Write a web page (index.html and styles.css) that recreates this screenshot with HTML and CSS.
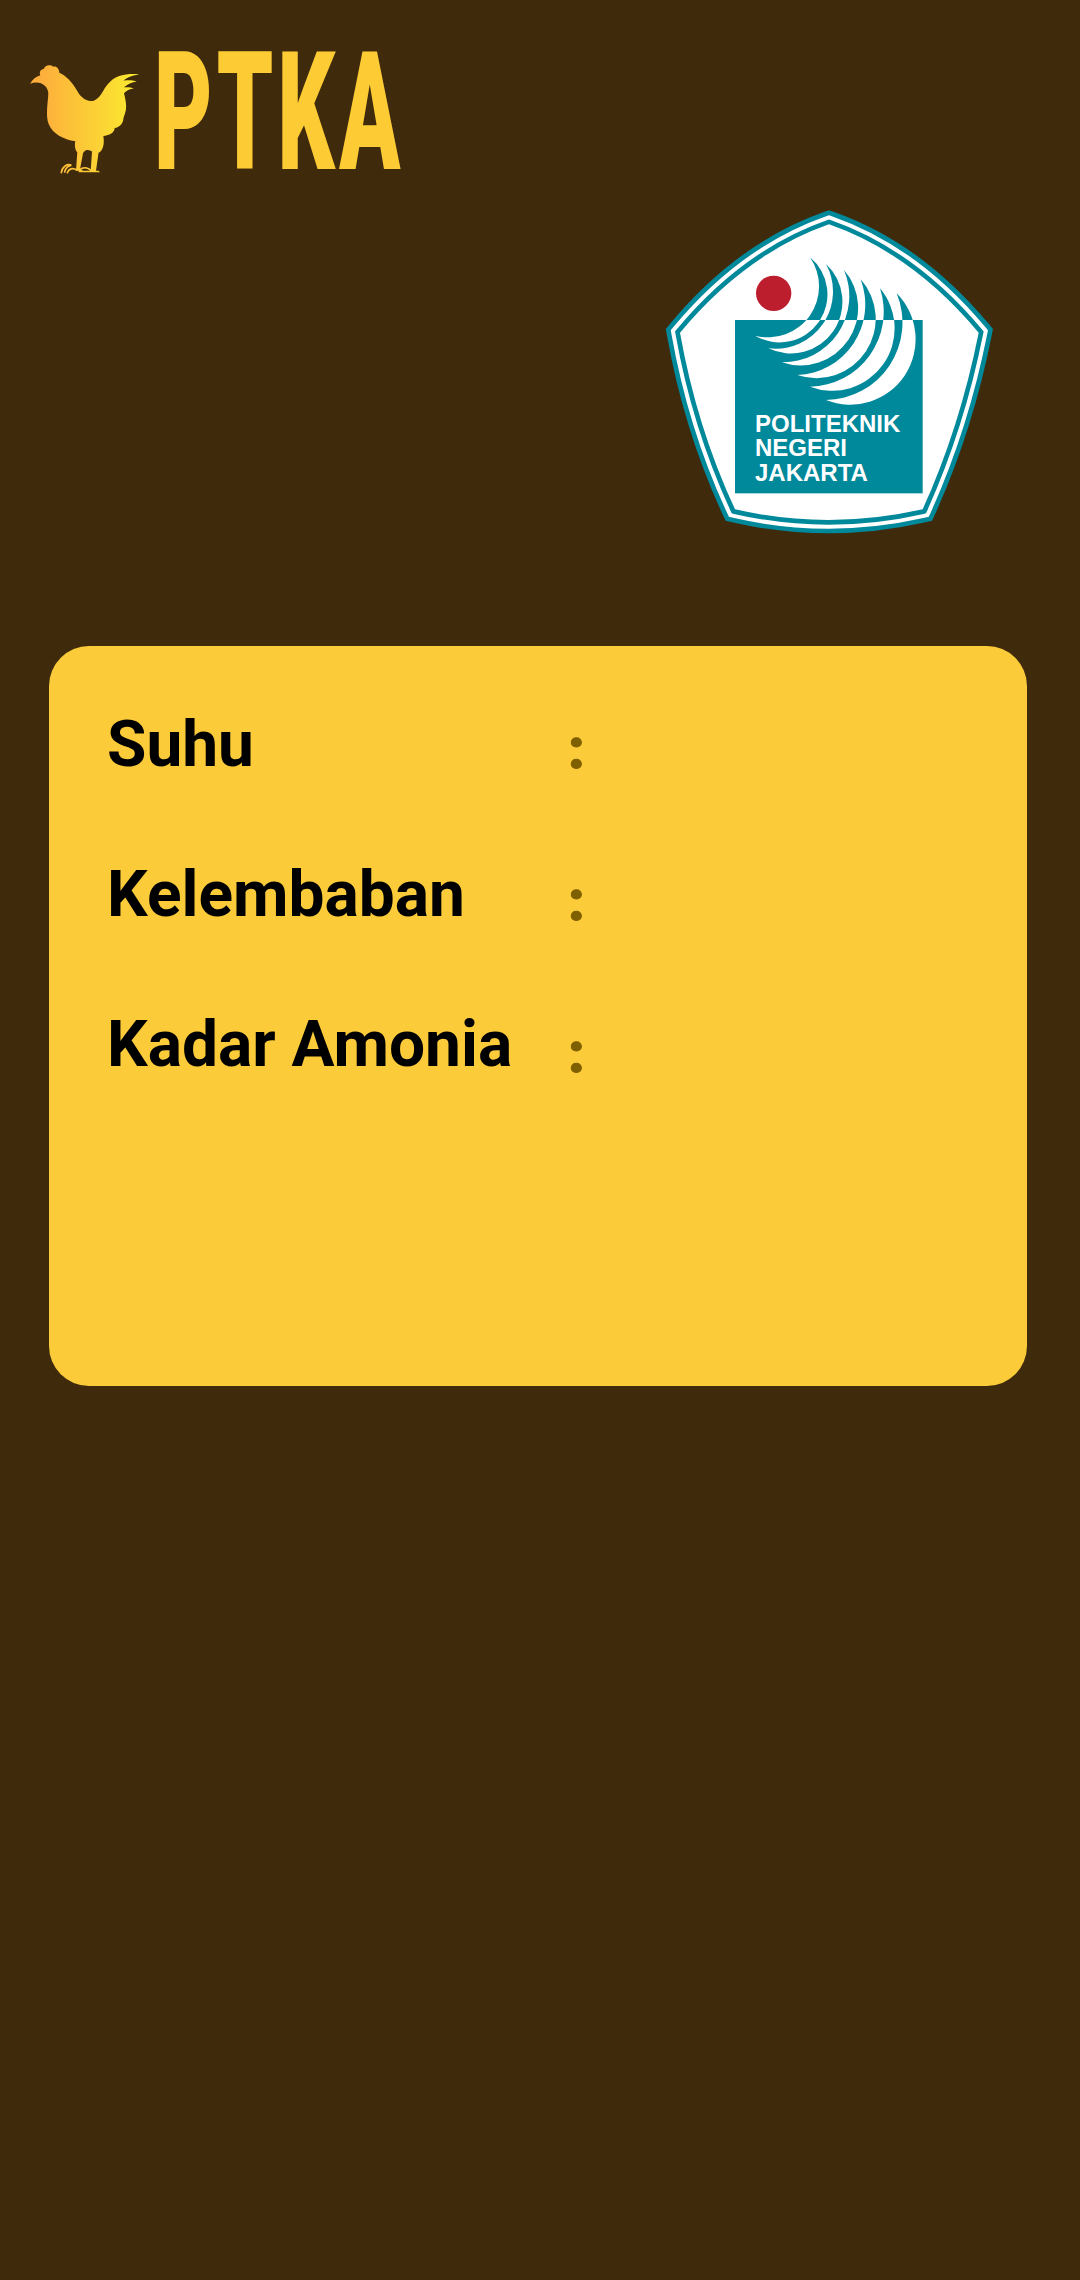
FILE: index.html
```html
<!DOCTYPE html>
<html lang="id">
<head>
<meta charset="utf-8">
<title>PTKA</title>
<link rel="stylesheet" href="styles.css">
</head>
<body>
<header class="brand">
  <svg class="hen" viewBox="0 0 390 390" aria-hidden="true">
    <defs>
      <linearGradient id="henfill" gradientUnits="userSpaceOnUse" x1="60" x2="340" y1="0" y2="0">
        <stop offset="0" stop-color="#fdae3c"/>
        <stop offset="1" stop-color="#fbe830"/>
      </linearGradient>
    </defs>
    <path class="hen-body" d="M30 101 C38 88 48 80 61 76 C57 66 62 58 71 57 C75 47 88 41 100 50 C108 47 117 54 118 68 C138 76 157 97 170 120 C180 140 195 152 212 153 C228 154 240 140 250 122 C262 100 278 84 300 77 C320 71 340 71 358 73 C340 76 322 81 311 92 C325 90 340 91 350 95 C336 96 322 102 312 112 C322 111 334 112 342 115 C330 117 318 122 312 130 C316 145 320 165 318 178 C316 190 312 198 310 206 C310 220 298 232 284 234 C284 248 268 256 250 258 C253 275 252 295 240 306 C228 312 218 306 212 302 C204 298 196 300 192 305 C186 312 176 312 168 302 C164 292 164 282 166 274 C130 268 98 252 86 222 C76 198 84 155 85 130 C84 108 62 90 30 101 Z"/>
    <path class="hen-leg" d="M172 305 L190 305 L180 358 L190 362 L168 362 Z M216 305 L236 305 L228 362 L236 362 L240 367 L176 367 L176 362 L212 362 Z"/>
    <path class="hen-toe" d="M124 368 C126 350 142 340 154 346 C146 346 136 354 134 366 M142 368 C146 356 158 352 170 360 M178 360 C190 350 204 352 214 362"/>
  </svg>
  <span class="wordmark">PTKA</span>
</header>

<div class="crest-row">
  <svg class="crest" viewBox="0 0 1140 1080" role="img" aria-label="Politeknik Negeri Jakarta">
    <defs>
      <clipPath id="above"><rect x="0" y="0" width="1140" height="390"/></clipPath>
      <clipPath id="inside"><rect x="285" y="390" width="563" height="520"/></clipPath>
      <path id="shield" d="M567 103 Q817 190 1016 428 Q960 710 848 958 Q565 1022 285 958 Q170 710 120 428 Q318 190 567 103 Z"/>
      <g id="waves">
        <path d="M510 202 A144 144 0 0 1 345 437 A153 153 0 0 0 510 202 Z"/>
        <path d="M558 222 A155 155 0 0 1 385 475 A172 172 0 0 0 558 222 Z"/>
        <path d="M612 240 A173 173 0 0 1 425 517 A199 199 0 0 0 612 240 Z"/>
        <path d="M662 268 A178 178 0 0 1 472 555 A212 212 0 0 0 662 268 Z"/>
        <path d="M720 295 A187 187 0 0 1 510 590 A225 225 0 0 0 720 295 Z"/>
        <path d="M770 310 A196 196 0 0 1 558 630 A232 232 0 0 0 770 310 Z"/>
      </g>
    </defs>
    <use href="#shield" class="ring-a"/>
    <use href="#shield" class="ring-b"/>
    <use href="#shield" class="ring-c"/>
    <use href="#shield" class="ring-d"/>
    <circle cx="401" cy="310" r="53" class="sun"/>
    <rect x="285" y="390" width="563" height="520" class="panel"/>
    <use href="#waves" class="wave-up" clip-path="url(#above)"/>
    <use href="#waves" class="wave-down" clip-path="url(#inside)"/>
    <text class="crest-text" x="345" y="726">POLITEKNIK</text>
    <text class="crest-text" x="345" y="798">NEGERI</text>
    <text class="crest-text" x="345" y="872">JAKARTA</text>
  </svg>
</div>

<main class="card">
  <div class="row"><span class="label">Suhu</span><span class="sep">:</span></div>
  <div class="row"><span class="label">Kelembaban</span><span class="sep">:</span></div>
  <div class="row"><span class="label">Kadar Amonia</span><span class="sep">:</span></div>
</main>
</body>
</html>
```
FILE: styles.css
```css
html, body { margin: 0; padding: 0; }
body {
  width: 1080px;
  height: 2280px;
  background: #3f2a0c;
  overflow: hidden;
  font-family: Roboto, "Liberation Sans", sans-serif;
}
.brand {
  display: flex;
  align-items: flex-start;
  height: 190px;
  padding: 50px 0 0 20px;
  box-sizing: border-box;
}
.hen { width: 130px; height: 130px; flex: none; display: block; }
.hen-body, .hen-leg { fill: url(#henfill); }
.hen-toe { fill: none; stroke: url(#henfill); stroke-width: 5; stroke-linecap: round; }
.wordmark {
  display: block;
  margin-left: 4px;
  margin-top: -34px;
  font-family: Roboto, sans-serif;
  font-weight: 900;
  font-size: 166px;
  line-height: 194px;
  letter-spacing: 8px;
  color: #fdcb33;
  transform: scaleX(0.54);
  transform-origin: left top;
  white-space: nowrap;
}
.crest-row { display: flex; justify-content: flex-end; padding-right: 60px; height: 456px; }
.crest { width: 380px; height: 360px; display: block; }
.ring-a { fill: none; stroke: #00889b; stroke-width: 80; }
.ring-b { fill: none; stroke: #ffffff; stroke-width: 52; }
.ring-c { fill: none; stroke: #00889b; stroke-width: 28; }
.ring-d { fill: #ffffff; }
.sun { fill: #bd1e2d; }
.panel { fill: #00889b; }
.wave-up { fill: #00889b; }
.wave-down { fill: #ffffff; }
.crest-text {
  font-family: "Liberation Sans", Arial, sans-serif;
  font-weight: 700;
  font-size: 72px;
  fill: #ffffff;
}
.card {
  box-sizing: border-box;
  width: 978px;
  height: 740px;
  margin-left: 49px;
  padding: 62px 0 0 58px;
  background: #fccb39;
  border-radius: 40px;
}
.row { display: flex; height: 150px; }
.label {
  width: 461px;
  font-weight: 700;
  font-size: 64px;
  line-height: 74px;
  color: #000;
}
.sep {
  font-size: 56px;
  line-height: 74px;
  color: #7f6000;
  font-weight: 900;
  margin-top: 4px;
  -webkit-text-stroke: 1px #7f6000;
}
.row:nth-child(2) .sep { margin-top: 6px; }
.row:nth-child(3) .sep { margin-top: 8px; }
```
